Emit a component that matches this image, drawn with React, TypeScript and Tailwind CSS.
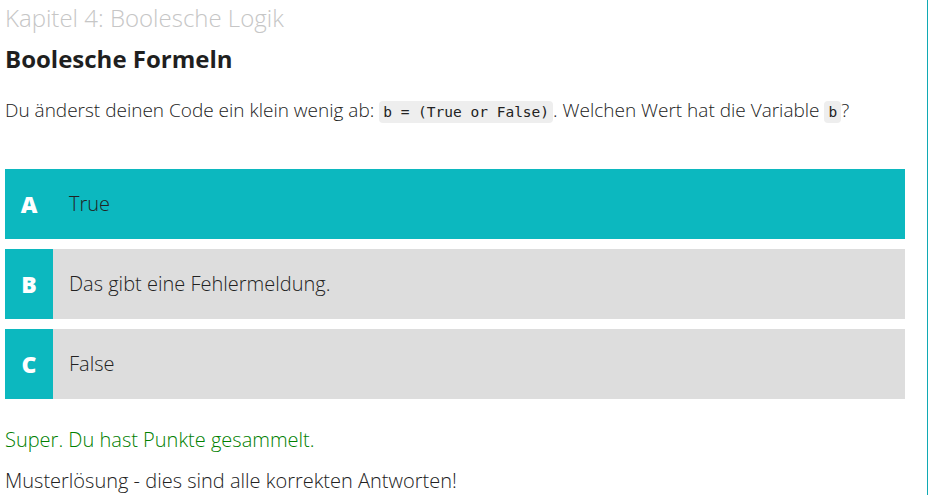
import React from "react";

const options = [
  { letter: "A", text: "True", selected: true },
  { letter: "B", text: "Das gibt eine Fehlermeldung.", selected: false },
  { letter: "C", text: "False", selected: false },
];

function Code({ children }: { children: React.ReactNode }) {
  return (
    <code className="rounded-[4px] bg-[#eeeeee] px-[4px] py-[3px] font-['DejaVu_Sans_Mono',monospace] text-[14.5px] text-[#222]">
      {children}
    </code>
  );
}

export default function App() {
  return (
    <div className="flex min-h-[495px] w-[928px] bg-white font-['Open_Sans',sans-serif] text-[#222]">
      <div className="flex-1 px-[5px]">
        <div className="pt-[2px] text-[24px] font-light leading-[32px] text-[#c6c6c6]">
          Kapitel 4: Boolesche Logik
        </div>
        <h1 className="mt-[9px] text-[24px] font-bold leading-[32px] text-[#1f1f1f]">
          Boolesche Formeln
        </h1>
        <p className="mt-[21px] text-[19px] font-light leading-[28px]">
          Du änderst deinen Code ein klein wenig ab: <Code>b = (True or False)</Code>. Welchen Wert hat die Variable <Code>b</Code>?
        </p>

        {/* Answer options */}
        <div className="mt-[43px] flex w-[900px] flex-col gap-[10px]">
          {options.map((o) => (
            <div
              key={o.letter}
              className={`flex h-[70px] items-center ${o.selected ? "bg-[#0cb8bf]" : "bg-[#dddddd]"}`}
            >
              <div className="flex h-full w-[48px] items-center justify-center bg-[#0cb8bf] text-[23px] font-extrabold text-white">
                {o.letter}
              </div>
              <div className="pl-[16px] text-[20px] font-light">{o.text}</div>
            </div>
          ))}
        </div>

        <p className="mt-[27px] text-[20px] font-light leading-[28px] text-[#008000]">
          Super. Du hast Punkte gesammelt.
        </p>
        <p className="mt-[13px] text-[20px] font-light leading-[28px]">
          Musterlösung - dies sind alle korrekten Antworten!
        </p>
      </div>
      <div className="w-px self-stretch bg-[#10aab4]" />
    </div>
  );
}
